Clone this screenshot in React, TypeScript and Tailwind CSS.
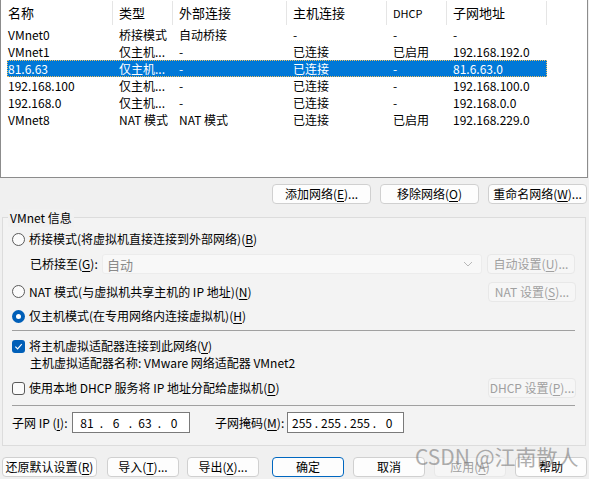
import React from 'react';

const font = { fontFamily: '"Noto Sans CJK SC", "Noto Sans", sans-serif' };

// column widths of the network list (px)
const cols = [112, 60, 114, 100, 60, 100];

const rows = [
  ['VMnet0', '桥接模式', '自动桥接', '-', '-', '-'],
  ['VMnet1', '仅主机...', '-', '已连接', '已启用', '192.168.192.0'],
  ['81.6.63', '仅主机...', '-', '已连接', '-', '81.6.63.0'],
  ['192.168.100', '仅主机...', '-', '已连接', '-', '192.168.100.0'],
  ['192.168.0', '仅主机...', '-', '已连接', '-', '192.168.0.0'],
  ['VMnet8', 'NAT 模式', 'NAT 模式', '已连接', '已启用', '192.168.229.0'],
];

const Key = ({ k }: { k: string }) => (
  <>
    (<u className="underline underline-offset-2">{k}</u>)
  </>
);

const Btn = ({
  children,
  w,
  disabled,
  primary,
}: {
  children: React.ReactNode;
  w: string;
  disabled?: boolean;
  primary?: boolean;
}) => (
  <div
    className={`${w} h-[20px] flex items-center justify-center whitespace-nowrap rounded-[4px] text-[12px] leading-none ${
      disabled
        ? 'bg-[#f6f6f6] border border-[#e8e8e8] text-[#a0a0a0]'
        : primary
          ? 'bg-[#fdfdfd] border border-[#0067c0] text-black'
          : 'bg-[#fdfdfd] border border-[#d0d0d0] text-black'
    }`}
  >
    {children}
  </div>
);

const Radio = ({ on }: { on?: boolean }) =>
  on ? (
    <span className="w-[13px] h-[13px] rounded-full bg-[#005fb8] flex items-center justify-center shrink-0">
      <span className="w-[5px] h-[5px] rounded-full bg-white" />
    </span>
  ) : (
    <span className="w-[13px] h-[13px] rounded-full border border-[#5a5a5a] bg-[#fbfbfb] shrink-0" />
  );

const Check = ({ on }: { on?: boolean }) =>
  on ? (
    <span className="w-[13px] h-[13px] rounded-[3px] bg-[#005fb8] flex items-center justify-center shrink-0">
      <svg width="9" height="9" viewBox="0 0 10 10" fill="none">
        <path d="M1.5 5.2 L4 7.6 L8.6 2.4" stroke="white" strokeWidth="1.3" />
      </svg>
    </span>
  ) : (
    <span className="w-[13px] h-[13px] rounded-[3px] border border-[#5a5a5a] bg-[#fbfbfb] shrink-0" />
  );

const IpBox = ({ parts, w }: { parts: string[]; w: string }) => (
  <div className={`${w} h-[21px] bg-white border border-[#7a7a7a] flex items-center pl-[2px] text-[12px] leading-none`}>
    {parts.map((p, i) => (
      <React.Fragment key={i}>
        <span className="w-[24px] text-center">{p}</span>
        {i < 3 && <span className="w-[5px] text-center">.</span>}
      </React.Fragment>
    ))}
  </div>
);

export default function App() {
  return (
    <div className="relative w-[589px] h-[479px] bg-[#f0f0f0] text-black overflow-hidden" style={font}>
      {/* network list */}
      <div className="w-[588px] h-[178px] bg-white border-l border-r border-b border-[#8c8c8c] text-[12px]">
        <div className="flex h-[26px]">
          {['名称', '类型', '外部连接', '主机连接', 'DHCP', '子网地址'].map((h, i) => (
            <div
              key={h}
              style={{ width: cols[i] }}
              className={`flex items-center h-[24px] mt-[1px] border-r border-[#e5e5e5] ${i === 0 ? 'pl-[7px]' : 'pl-[6px]'} ${
                h === 'DHCP' ? 'text-[11px]' : 'text-[13px]'
              }`}
            >
              {h}
            </div>
          ))}
        </div>
        <div className="flex flex-col pl-[6px]">
          {rows.map((r, ri) => {
            const sel = ri === 2;
            return (
              <div
                key={ri}
                className={`flex w-[540px] h-[17px] items-center ${
                  sel ? 'bg-[#0078d7] text-white outline outline-1 outline-dotted outline-[#f0c060] -outline-offset-1' : ''
                }`}
              >
                {r.map((c, ci) => (
                  <div
                    key={ci}
                    style={{ width: ci === 0 ? cols[0] - 6 : cols[ci] }}
                    className={`${ci === 0 ? 'pl-[1px]' : 'pl-[6px]'} leading-none whitespace-nowrap`}
                  >
                    {c}
                  </div>
                ))}
              </div>
            );
          })}
        </div>
      </div>

      {/* list buttons */}
      <div className="flex justify-end gap-[9px] mt-[6px] pr-[2px]">
        <Btn w="w-[99px]">
          添加网络<Key k="E" />...
        </Btn>
        <Btn w="w-[99px]">
          移除网络<Key k="O" />
        </Btn>
        <Btn w="w-[99px]">
          重命名网络<Key k="W" />...
        </Btn>
      </div>

      {/* VMnet info group */}
      <div className="mx-[2px] mt-[13px] w-[584px] border border-[#dcdcdc] bg-[#f3f3f3] text-[12px] leading-none px-[9px]">
        <div className="-mt-[9px] h-[18px] w-fit -ml-[4px] px-[2px] flex items-center bg-[#f1f1f1]">VMnet 信息</div>

        <div className="mt-[3px] h-[18px] flex items-center gap-[4px]">
          <Radio />
          <span>
            桥接模式(将虚拟机直接连接到外部网络)<Key k="B" />
          </span>
        </div>

        <div className="mt-[6px] h-[20px] flex items-center pl-[18px]">
          <span className="w-[72px]">
            已桥接至<Key k="G" />:
          </span>
          <div className="w-[380px] h-[20px] bg-[#f8f8f8] border border-[#ececec] rounded-[3px] flex items-center justify-between pl-[4px] pr-[8px] text-[#8a8a8a] text-[13px]">
            <span>自动</span>
            <svg width="10" height="6" viewBox="0 0 10 6" fill="none">
              <path d="M1 1 L5 5 L9 1" stroke="#b8b8b8" strokeWidth="1" />
            </svg>
          </div>
          <div className="ml-[5px]">
            <Btn w="w-[88px]" disabled>
              自动设置<Key k="U" />...
            </Btn>
          </div>
        </div>

        <div className="mt-[8px] h-[19px] flex items-center">
          <div className="flex items-center gap-[4px] flex-1">
            <Radio />
            <span>
              NAT 模式(与虚拟机共享主机的 IP 地址)<Key k="N" />
            </span>
          </div>
          <Btn w="w-[88px]" disabled>
            NAT 设置<Key k="S" />...
          </Btn>
        </div>

        <div className="mt-[6px] h-[18px] flex items-center gap-[4px]">
          <Radio on />
          <span>
            仅主机模式(在专用网络内连接虚拟机)<Key k="H" />
          </span>
        </div>

        <div className="mt-[5px] h-px bg-[#a0a0a0] mr-[1px]" />

        <div className="mt-[6px] h-[18px] flex items-center gap-[4px]">
          <Check on />
          <span>
            将主机虚拟适配器连接到此网络<Key k="V" />
          </span>
        </div>

        <div className="h-[16px] flex items-center pl-[18px]">主机虚拟适配器名称: VMware 网络适配器 VMnet2</div>

        <div className="mt-[8px] h-[18px] flex items-center">
          <div className="flex items-center gap-[4px] flex-1">
            <Check />
            <span>
              使用本地 DHCP 服务将 IP 地址分配给虚拟机<Key k="D" />
            </span>
          </div>
          <Btn w="w-[88px]" disabled>
            DHCP 设置<Key k="P" />...
          </Btn>
        </div>

        <div className="mt-[8px] h-px bg-[#a0a0a0] mr-[1px]" />

        <div className="mt-[6px] mb-[12px] h-[21px] flex items-center">
          <span className="w-[60px]">
            子网 IP <Key k="I" />:
          </span>
          <IpBox w="w-[118px]" parts={['81', '6', '63', '0']} />
          <span className="ml-[25px] w-[72px]">
            子网掩码<Key k="M" />:
          </span>
          <IpBox w="w-[117px]" parts={['255', '255', '255', '0']} />
        </div>
      </div>

      {/* dialog buttons */}
      <div className="flex items-center mt-[11px] px-[2px]">
        <Btn w="w-[95px]">
          还原默认设置<Key k="R" />
        </Btn>
        <div className="ml-[10px]">
          <Btn w="w-[72px]">
            导入<Key k="T" />...
          </Btn>
        </div>
        <div className="ml-[8px]">
          <Btn w="w-[72px]">
            导出<Key k="X" />...
          </Btn>
        </div>
        <div className="ml-[13px] flex gap-[9px]">
          <Btn w="w-[72px]" primary>
            确定
          </Btn>
          <Btn w="w-[72px]">取消</Btn>
          <Btn w="w-[72px]" disabled>
            应用<Key k="A" />
          </Btn>
          <Btn w="w-[72px]">帮助</Btn>
        </div>
      </div>

      {/* watermark */}
      <div className="absolute left-[415px] top-[446px] text-[21px] leading-none text-[#7a7a7a] opacity-60 whitespace-nowrap pointer-events-none">
        CSDN @江南散人
      </div>
    </div>
  );
}
